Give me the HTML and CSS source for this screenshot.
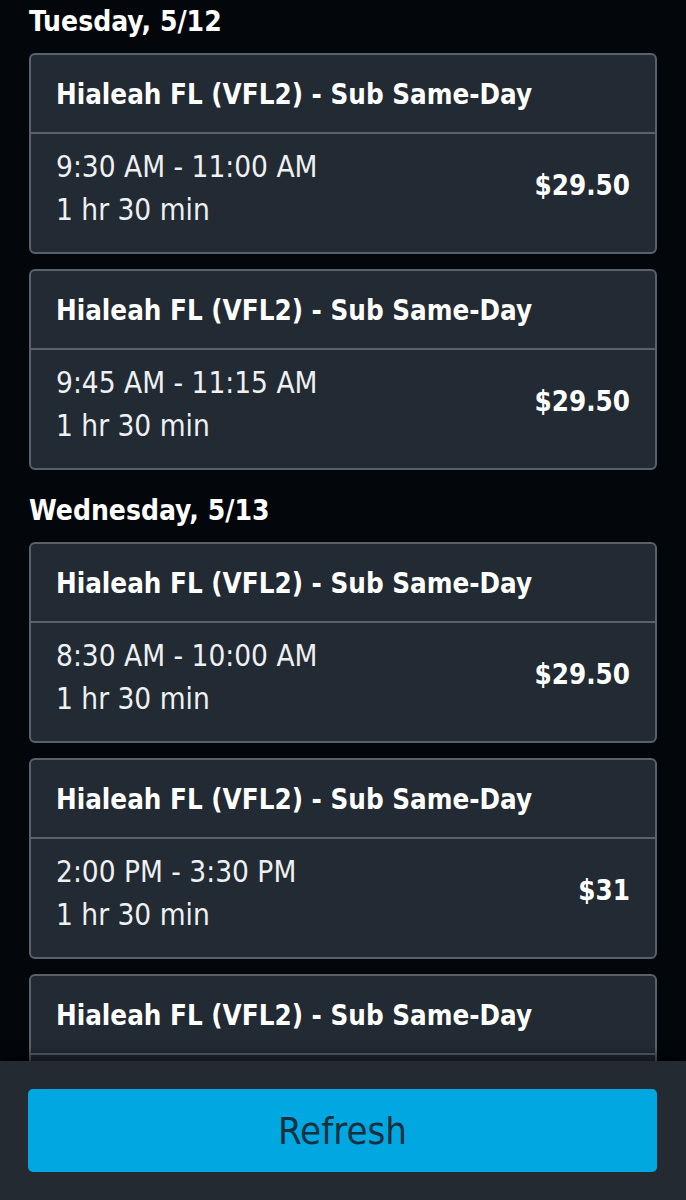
FILE: index.html
```html
<!DOCTYPE html>
<html lang="en">
<head>
  <meta charset="UTF-8">
  <meta name="viewport" content="width=device-width, initial-scale=1.0">
  <title>Offers</title>
  <link rel="stylesheet" href="styles.css">
</head>
<body>

  <div class="list">

    <h2 class="day">Tuesday, 5/12</h2>

    <div class="block">
      <div class="block-head">Hialeah FL (VFL2) - Sub Same-Day</div>
      <div class="block-body">
        <div class="times">
          <div>9:30 AM - 11:00 AM</div>
          <div>1 hr 30 min</div>
        </div>
        <div class="price">$29.50</div>
      </div>
    </div>

    <div class="block">
      <div class="block-head">Hialeah FL (VFL2) - Sub Same-Day</div>
      <div class="block-body">
        <div class="times">
          <div>9:45 AM - 11:15 AM</div>
          <div>1 hr 30 min</div>
        </div>
        <div class="price">$29.50</div>
      </div>
    </div>

    <h2 class="day">Wednesday, 5/13</h2>

    <div class="block">
      <div class="block-head">Hialeah FL (VFL2) - Sub Same-Day</div>
      <div class="block-body">
        <div class="times">
          <div>8:30 AM - 10:00 AM</div>
          <div>1 hr 30 min</div>
        </div>
        <div class="price">$29.50</div>
      </div>
    </div>

    <div class="block">
      <div class="block-head">Hialeah FL (VFL2) - Sub Same-Day</div>
      <div class="block-body">
        <div class="times">
          <div>2:00 PM - 3:30 PM</div>
          <div>1 hr 30 min</div>
        </div>
        <div class="price">$31</div>
      </div>
    </div>

    <div class="block">
      <div class="block-head">Hialeah FL (VFL2) - Sub Same-Day</div>
      <div class="block-body">
        <div class="times">
          <div>10:00 AM - 11:30 AM</div>
          <div>1 hr 30 min</div>
        </div>
        <div class="price">$31</div>
      </div>
    </div>

  </div>

  <div class="footer">
    <button class="refresh-btn">Refresh</button>
  </div>

</body>
</html>
```

FILE: styles.css
```css
*
    {
    margin: 0;
    padding: 0;
    box-sizing: border-box;
    }

:root
    {
    --bg: #03070c;
    --card: #222a33;
    --line: #59616a;
    --wht: #ffffff;
    --txt: #eef0f2;
    --blu: #00a7e0;
    --ink: #17303f;
    }

body
    {
    background-color: var(--bg);
    font-family: "DejaVu Sans Condensed", "DejaVu Sans", sans-serif;
    color: var(--wht);
    height: 1200px;
    overflow: hidden;
    }

.list
    {
    padding: 2px 29px 0 29px;
    }

.day
    {
    font-size: 28px;
    font-weight: 700;
    line-height: 40px;
    margin: 0 0 11px 0;
    }

.block + .day
    {
    margin-top: 21px;
    }

.block
    {
    background-color: var(--card);
    border: 2px solid var(--line);
    border-radius: 6px;
    margin-bottom: 15px;
    }

.block-head
    {
    padding: 21px 25px 19px 25px;
    font-size: 27.5px;
    font-weight: 700;
    line-height: 37px;
    border-bottom: 2px solid var(--line);
    }

.block-body
    {
    display: flex;
    justify-content: space-between;
    align-items: center;
    padding: 12px 25px 20px 25px;
    }

.times
    {
    font-size: 29.5px;
    line-height: 43px;
    color: var(--txt);
    }

.price
    {
    font-size: 27.5px;
    font-weight: 700;
    margin-bottom: 8px;
    }

.footer
    {
    position: fixed;
    left: 0;
    right: 0;
    bottom: 0;
    height: 139px;
    padding: 28px 29px 28px 28px;
    background-color: #232a31;
    box-shadow: 0 -6px 10px rgba(0, 0, 0, 0.5);
    }

.refresh-btn
    {
    display: block;
    width: 100%;
    height: 83px;
    background-color: var(--blu);
    border: none;
    border-radius: 5px;
    font-family: "DejaVu Sans Condensed", "DejaVu Sans", sans-serif;
    font-size: 38px;
    color: var(--ink);
    cursor: pointer;
    }
```
